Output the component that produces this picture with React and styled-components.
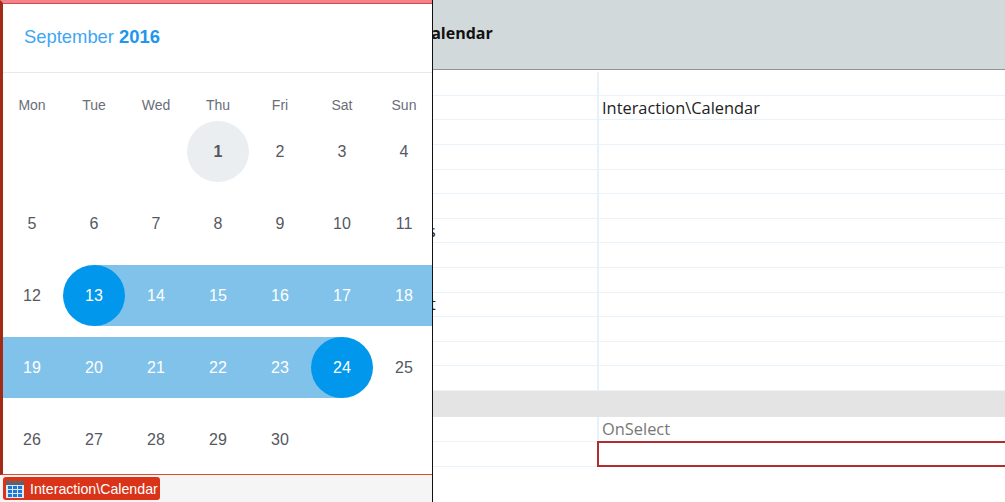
import styled, { createGlobalStyle } from 'styled-components'

const GlobalStyle = createGlobalStyle`
  html, body {
    margin: 0;
    padding: 0;
    background: white;
  }
`;

const Page = styled.div`
  display: flex;
  width: 1005px;
  height: 502px;
  overflow: hidden;
`;

const CalendarPanel = styled.div`
  display: flex;
  flex-direction: column;
  flex: 0 0 433px;
  box-sizing: border-box;
  height: 502px;
  border-right: 1.5px solid #111;
  font-family: "Liberation Sans", Arial, sans-serif;
  overflow: hidden;
`;

const CalendarFrame = styled.div`
  flex: 1;
  box-sizing: border-box;
  border-left: 3px solid #a32a14;
  border-top: 3px solid #f2828c;
  border-bottom: 1px solid #e2492f;
  overflow: hidden;
`;

const MonthHeader = styled.div`
  display: flex;
  align-items: center;
  height: 67px;
  padding-left: 21px;
  padding-bottom: 2px;
  border-bottom: 1.5px solid #e9e9e9;
  box-shadow: inset 0 1px 0 #d84a4a;
  font-size: 18.4px;
  color: #3ea6f5;
`;

const Year = styled.b`
  margin-left: 5px;
  color: #2196ec;
`;

const DayGrid = styled.div`
  display: grid;
  grid-template-columns: repeat(7, 62px);
  grid-auto-rows: 61px;
  row-gap: 11px;
  margin-left: -2px;
`;

const WeekHeader = styled(DayGrid)`
  grid-auto-rows: 18px;
  margin-top: 23px;
  margin-bottom: 7px;
`;

const WeekDay = styled.div`
  display: flex;
  align-items: center;
  justify-content: center;
  font-size: 14px;
  color: #6b6d78;
`;

const Day = styled.div`
  display: flex;
  align-items: center;
  justify-content: center;
  font-size: 16px;
  color: ${p => (p.$inRange || p.$edge ? 'white' : '#55585f')};
  font-weight: ${p => (p.$today ? 700 : 400)};
  background: ${p => {
    if (p.$edge === 'start') return 'linear-gradient(to right, transparent 50%, #80c2e9 50%)';
    if (p.$edge === 'end') return 'linear-gradient(to right, #80c2e9 50%, transparent 50%)';
    return p.$inRange ? '#80c2e9' : 'transparent';
  }};
`;

const DayCircle = styled.span`
  display: flex;
  align-items: center;
  justify-content: center;
  width: 62px;
  height: 61px;
  border-radius: 50%;
  background: ${p => (p.$edge ? '#0097ec' : '#ebeef0')};
`;

const Footer = styled.div`
  display: flex;
  align-items: center;
  flex: 0 0 27px;
  padding-left: 3px;
  background: #f5f5f5;
`;

const Tag = styled.div`
  display: flex;
  align-items: center;
  gap: 6px;
  box-sizing: border-box;
  width: 157px;
  height: 23px;
  padding-left: 3px;
  border-radius: 3px;
  background: #d9341a;
  color: white;
  font-size: 14.2px;
  white-space: nowrap;
`;

const PropertyPanel = styled.div`
  flex: 1;
  min-width: 0;
  overflow: hidden;
  font-family: "Open Sans", "Noto Sans", sans-serif;
`;

const TitleBar = styled.div`
  display: flex;
  align-items: center;
  box-sizing: border-box;
  height: 69.5px;
  padding-bottom: 2px;
  border-bottom: 1.5px solid #8f9393;
  background: #d2d9da;
`;

const TitleText = styled.span`
  margin-left: -12px;
  font-size: 16px;
  font-weight: 700;
  color: #111;
  white-space: nowrap;
`;

const ClippedLabel = styled.span`
  margin-left: ${p => p.$shift}px;
  font-size: 16px;
  color: #222;
  white-space: nowrap;
`;

const Rows = styled.div`
  display: flex;
  flex-direction: column;
  margin-right: -4px;
`;

const Row = styled.div`
  display: grid;
  grid-template-columns: 164px 1fr;
  box-sizing: border-box;
  height: ${p => (p.$first ? 26.3 : 24.6)}px;
  border-bottom: 1.5px solid #eaf3f9;
`;

const NameCell = styled.div`
  display: flex;
  align-items: center;
  overflow: hidden;
`;

const ValueCell = styled.div`
  display: flex;
  align-items: center;
  margin-top: ${p => (p.$first ? 2 : 0)}px;
  padding-left: 3px;
  padding-bottom: 2px;
  border-left: 2px solid #e6f1f9;
  font-size: 16.4px;
  color: ${p => (p.$muted ? '#777' : '#222')};
`;

const SectionBand = styled.div`
  height: 26.5px;
  background: #e4e4e4;
`;

const EditRow = styled.div`
  display: grid;
  grid-template-columns: 164px 1fr;
  height: 26px;
  margin-top: -1px;
`;

const EditName = styled.div`
  box-sizing: border-box;
  border-top: 1.5px solid #eaf3f9;
  border-bottom: 1.5px solid #eaf3f9;
`;

const EditBox = styled.div`
  border: 2px solid #b22d2d;
`;

const WEEK_DAYS = ['Mon', 'Tue', 'Wed', 'Thu', 'Fri', 'Sat', 'Sun'];
const FIRST_OFFSET = 3;
const LAST_DAY = 30;

const CalendarIcon = () => (
  <svg width="18" height="18" viewBox="0 0 18 18">
    <rect x="0" y="1" width="18" height="17" fill="#dfe7ee" />
    <rect x="0" y="1" width="18" height="4" fill="#5f6368" />
    <rect x="3" y="0" width="2" height="2" fill="#a5503f" />
    <rect x="8" y="0" width="2" height="2" fill="#a5503f" />
    <rect x="13" y="0" width="2" height="2" fill="#a5503f" />
    {[2, 7, 12].map(x =>
      [6, 10, 14].map(y => (
        <rect key={`${x}-${y}`} x={x} y={y} width="4" height="3" fill="#1c78d8" />
      ))
    )}
  </svg>
);

const App = () => {
  const cells = [...Array(FIRST_OFFSET).fill(null)];
  for (let day = 1; day <= LAST_DAY; day++) cells.push(day);

  const renderDay = (day, i) => {
    if (!day) return <Day key={`blank-${i}`} />;
    if (day === 1) return <Day key={day} $today><DayCircle>{day}</DayCircle></Day>;
    if (day === 13) return <Day key={day} $edge="start"><DayCircle $edge>{day}</DayCircle></Day>;
    if (day === 24) return <Day key={day} $edge="end"><DayCircle $edge>{day}</DayCircle></Day>;
    return <Day key={day} $inRange={day > 13 && day < 24}>{day}</Day>;
  };

  return <Page>
    <GlobalStyle />
    <CalendarPanel>
      <CalendarFrame>
        <MonthHeader>September<Year>2016</Year></MonthHeader>
        <WeekHeader>
          {WEEK_DAYS.map(name => <WeekDay key={name}>{name}</WeekDay>)}
        </WeekHeader>
        <DayGrid>{cells.map(renderDay)}</DayGrid>
      </CalendarFrame>
      <Footer>
        <Tag><CalendarIcon />Interaction\Calendar</Tag>
      </Footer>
    </CalendarPanel>
    <PropertyPanel>
      <TitleBar><TitleText>Calendar</TitleText></TitleBar>
      <Rows>
        <Row $first><NameCell /><ValueCell $first /></Row>
        <Row><NameCell /><ValueCell>Interaction\Calendar</ValueCell></Row>
        <Row><NameCell /><ValueCell /></Row>
        <Row><NameCell /><ValueCell /></Row>
        <Row><NameCell /><ValueCell /></Row>
        <Row><NameCell /><ValueCell /></Row>
        <Row><NameCell><ClippedLabel $shift={-5}>s</ClippedLabel></NameCell><ValueCell /></Row>
        <Row><NameCell /><ValueCell /></Row>
        <Row><NameCell /><ValueCell /></Row>
        <Row><NameCell><ClippedLabel $shift={-3}>t</ClippedLabel></NameCell><ValueCell /></Row>
        <Row><NameCell /><ValueCell /></Row>
        <Row><NameCell /><ValueCell /></Row>
        <Row><NameCell /><ValueCell /></Row>
        <SectionBand />
        <Row><NameCell /><ValueCell $muted>OnSelect</ValueCell></Row>
        <EditRow><EditName /><EditBox /></EditRow>
      </Rows>
    </PropertyPanel>
  </Page>
}

export default App
